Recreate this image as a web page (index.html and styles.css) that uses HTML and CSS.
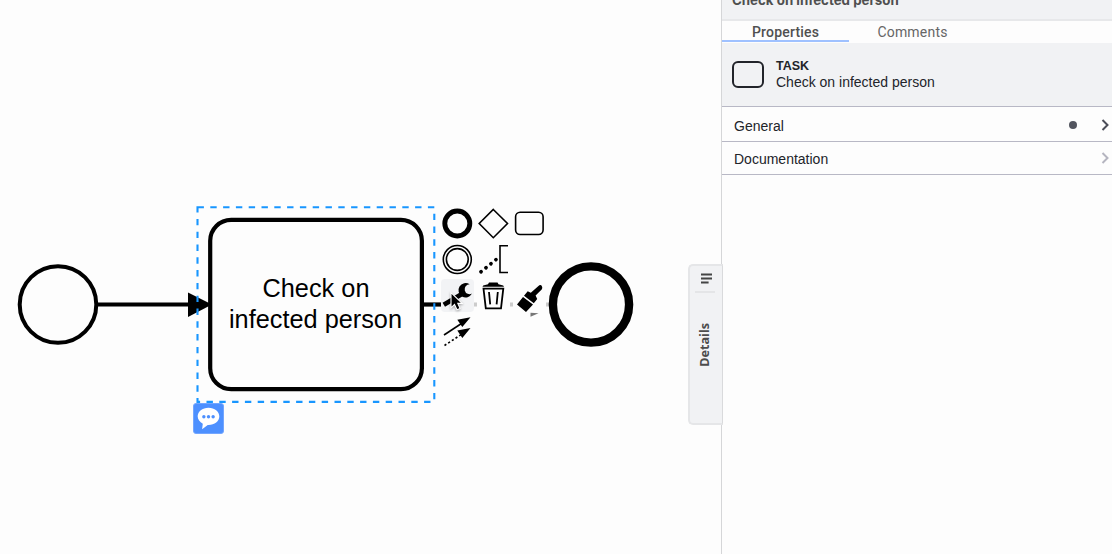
FILE: index.html
```html
<!DOCTYPE html>
<html lang="en">
<head>
<meta charset="utf-8">
<title>Check on infected person</title>
<link rel="stylesheet" href="styles.css">
</head>
<body>
<div class="app">
  <main class="canvas">
    <svg class="diagram" viewBox="0 0 721 554">
      <circle class="event" cx="58" cy="304.5" r="38.3" stroke-width="4"/>
      <path class="flow" d="M97 304.5H190"/>
      <path d="M188 292.5L212 304.5L188 317Z"/>
      <rect class="event" x="210.2" y="219.8" width="211.7" height="169.4" rx="21" stroke-width="4.2"/>
      <text class="label" x="316" y="297" textLength="107" lengthAdjust="spacingAndGlyphs">Check on</text>
      <text class="label" x="315.5" y="327.5" textLength="173" lengthAdjust="spacingAndGlyphs">infected person</text>
      <path class="flow" d="M422 304.5H441"/>
      <path class="flow faded" d="M474 304.5h3M510 304.5h3M546 304.5h3"/>
      <path class="tip" d="M530.5 312.8l8 .4-8 3.5z"/>
      <circle class="event" cx="591" cy="304.5" r="38.1" stroke-width="8.4"/>
      <rect class="selection" x="197.5" y="207.3" width="236.8" height="194.6"/>
    </svg>
    <div class="pad">
      <span class="entry"><svg viewBox="0 0 33 33"><circle cx="16.3" cy="16.5" r="12.5" stroke-width="4.9"/></svg></span>
      <span class="entry"><svg viewBox="0 0 33 33"><path d="M16.3 2.5L30.5 16.5L16.3 30.7L2.2 16.5Z"/></svg></span>
      <span class="entry"><svg viewBox="0 0 33 33"><rect x="2.6" y="5.2" width="27.5" height="22.3" rx="4.5"/></svg></span>
      <span class="entry"><svg viewBox="0 0 33 33"><circle cx="16.3" cy="16.5" r="14"/><circle cx="16.3" cy="16.5" r="10.9"/></svg></span>
      <span class="entry"><svg viewBox="0 0 33 33"><path d="M31 2.7H23V29.5H31"/><path d="M4 28.8L19.5 16.2" stroke-width="3.7" stroke-linecap="round" stroke-dasharray="0.1 6.3"/></svg></span>
      <span class="entry"></span>
      <span class="entry hover"><svg viewBox="0 0 33 33"><path d="M2.8 25.8L20.5 15.2" stroke-width="4.8"/><path class="solid" d="M28.6 5.2A7.2 7.2 0 1 0 31 14.6A5 5 0 1 1 28.6 5.2Z"/></svg></span>
      <span class="entry"><svg viewBox="0 0 33 33"><path class="solid" d="M5.5 7.8L6.2 6.4L11 5.2L12 3.4H20.5L21.5 5.2L26.2 6.4L27 7.8Z"/><path d="M6.5 9.6H26.3L24 29.3H8.8Z" stroke-width="1.8"/><path d="M12 13L13.2 25.3M20.8 13L19.6 25.3" stroke-width="1.8"/></svg></span>
      <span class="entry"><svg viewBox="0 0 33 33"><path class="solid" d="M4 25.4L10 18L20 25.6L13 33ZM11 16.8L14.7 12.3L17.8 13.8L26.3 6.3Q28.2 5.6 29 7.5Q29.8 9 28.7 10.5L22.6 16.6L24.2 20L20.8 24.2Z"/></svg></span>
      <span class="entry connect"><svg viewBox="0 0 33 33"><path d="M3 20L22 7.5"/><path d="M3.5 30.5L21 19" stroke-dasharray="2.2 2.2"/><path class="solid" d="M29.5 2.2L21.3 12L16.3 4.8ZM29.5 13L21.3 23L16.3 15.5Z"/></svg></span>
    </div>
    <svg class="cursor" viewBox="0 0 15 20"><path d="M2 1.5V16.8L5.5 13.5L8 18.8L11.1 17.4L8.8 12.4H13.2Z"/></svg>
    <div class="comment"><svg viewBox="0 0 30 30"><path d="M15 3.8C8.7 3.8 3.8 7.6 3.8 12.8C3.8 16 6 18.8 9.1 20.4L8.4 26L14.2 21.8H15C21.3 21.8 26.2 18 26.2 12.8S21.3 3.8 15 3.8Z"/><circle cx="10.2" cy="13.2" r="1.75"/><circle cx="15" cy="13.2" r="1.75"/><circle cx="19.8" cy="13.2" r="1.75"/></svg></div>
    <div class="handle">
      <svg class="bars" viewBox="0 0 12 12"><path d="M1 1.6H12M1 5.6H12M1 9.6H8.6"/></svg>
      <span class="handle-text">Details</span>
    </div>
  </main>
  <aside class="panel">
    <header class="title"><span>Check on infected person</span></header>
    <nav class="tabs"><span class="tab active"><b>Properties</b></span><span class="tab"><b>Comments</b></span></nav>
    <section class="element">
      <span class="task-icon"></span>
      <div><div class="kind">TASK</div><div class="name">Check on infected person</div></div>
    </section>
    <div class="row general"><span>General</span><i class="dot"></i><svg class="chevron" viewBox="0 0 9 12"><path d="M1.5 1L6.5 6L1.5 11"/></svg></div>
    <div class="row"><span>Documentation</span><svg class="chevron" viewBox="0 0 9 12"><path d="M1.5 1L6.5 6L1.5 11"/></svg></div>
  </aside>
</div>
</body>
</html>
```
FILE: styles.css
```css
* { box-sizing: border-box; }
body { margin: 0; font-family: "Liberation Sans", Arial, sans-serif; background: #fdfdfd; color: #22242a; }
.app { display: flex; width: 1112px; height: 554px; overflow: hidden; }
.canvas { position: relative; width: 721px; flex: none; }
.diagram { display: block; width: 721px; height: 554px; }
.event { fill: none; stroke: #000; }
.flow { fill: none; stroke: #000; stroke-width: 4.2; }
.faded { stroke: #ccc; }
.tip { fill: #777; }
.selection { fill: none; stroke: #1896ff; stroke-width: 2.1; stroke-dasharray: 6.4 6.4; }
.label { font-size: 25.5px; text-anchor: middle; fill: #000; }
.pad { position: absolute; left: 441px; top: 207px; display: grid; grid-template-columns: repeat(3, 33px); grid-auto-rows: 33px; gap: 3px; }
.entry { border-radius: 4px; }
.entry svg { display: block; width: 33px; height: 33px; overflow: visible; fill: none; stroke: #000; stroke-width: 1.6; }
.entry .solid { fill: #000; stroke: none; }
.hover { background: #f2f3f5; }
.cursor { position: absolute; left: 449px; top: 291px; width: 15px; height: 20px; fill: #000; stroke: #fff; stroke-width: 1.1; filter: drop-shadow(0 1px 1px #0005); }
.comment { position: absolute; left: 193px; top: 403px; width: 31px; height: 31px; border: 1px solid #73a6ff; border-radius: 3px; background: #4d90ff; }
.comment svg { display: block; width: 29px; height: 29px; }
.comment path { fill: #fff; }
.comment circle { fill: #4d90ff; }
.handle { position: absolute; left: 688px; top: 264px; width: 35px; height: 161px; padding-top: 7px; display: flex; flex-direction: column; align-items: center; border: 2px solid #e5e6e8; border-right: 1px solid #d9dadc; border-radius: 5px 0 0 5px; background: #f1f2f4; }
.bars { width: 12px; height: 12px; fill: none; stroke: #444; stroke-width: 2; }
.handle-text { position: relative; left: -1px; width: 20px; margin-top: 6px; padding-top: 30px; border-top: 2px solid #e4e5e7; writing-mode: sideways-lr; font: 700 12.6px/20px "Open Sans", sans-serif; color: #4c4c4c; }
.panel { flex: 1; border-left: 1px solid #d5d6d8; }
.title { height: 21px; display: flex; align-items: flex-end; padding: 0 10px 10px; border-bottom: 2px solid #e7e8ea; background: #f1f2f4; font: 700 13.3px/18px Inter, sans-serif; color: #4f4f4f; white-space: nowrap; }
.tabs { display: flex; height: 22px; }
.tab { width: 127px; border-bottom: 2px solid transparent; text-align: center; font: 14px/22px Roboto, sans-serif; letter-spacing: .2px; color: #666; }
.tab b { font-weight: 400; }
.active { height: 21px; border-bottom-color: #9fc1ff; color: #505050; }
.active b { font-weight: 500; }
.element { height: 64px; padding-left: 10px; display: flex; align-items: center; gap: 12px; border-bottom: 1px solid #b8b8c5; background: #f1f2f4; }
.task-icon { width: 32px; height: 27px; border: 2px solid #22242a; border-radius: 6px; }
.kind { font-size: 12.5px; font-weight: 700; line-height: 15px; }
.name { font-size: 14px; line-height: 17px; }
.row { display: flex; align-items: center; height: 33px; padding: 1px 2px 0 12px; border-bottom: 1px solid #b8b8c5; font-size: 14px; }
.row.general { height: 35px; padding-top: 3px; }
.row span { flex: 1; }
.dot { width: 8px; height: 8px; margin: 0 24px 1px 0; border-radius: 50%; background: #52555f; }
.chevron { width: 9px; height: 12px; margin-bottom: 2px; fill: none; stroke: #b5b5c0; stroke-width: 2; }
.general .chevron { stroke: #4b4d58; }
```
